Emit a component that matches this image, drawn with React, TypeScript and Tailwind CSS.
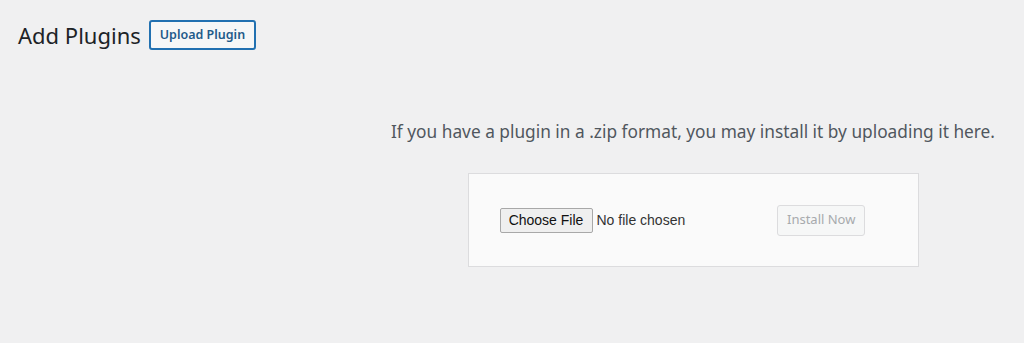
import React from "react";

export default function App() {
  return (
    <div className="h-[343px] w-[1024px] overflow-hidden bg-[#f0f0f1] font-['Noto_Sans',sans-serif] text-[#1d2327]">
      {/* Header */}
      <div className="flex items-center gap-[8px] pl-[18px] pt-[20px]">
        <h1 className="text-[22px] leading-[30px] font-normal text-[#1d2327]">Add Plugins</h1>
        <button className="h-[30px] rounded-[3px] border-2 border-[#2271b1] bg-[#f6f7f7] px-[9px] text-[12.5px] font-semibold text-[#1f5b8a]">
          Upload Plugin
        </button>
      </div>

      {/* Upload area */}
      <div className="ml-[362px] mt-[70px] flex flex-col items-center">
        <p className="text-[17.3px] leading-[24px] text-[#50575e]">
          If you have a plugin in a .zip format, you may install it by uploading it here.
        </p>
        <div className="mt-[29px] flex h-[94px] w-[451px] items-center border border-[#dcdcde] bg-[#fafafa] pl-[31px]">
          <div className="flex items-center font-['Liberation_Sans',Arial,sans-serif] text-[14px]">
            <span className="flex h-[25px] w-[93px] items-center justify-center rounded-[2px] border border-[#a8a8a8] bg-[#efefef] text-[#111]">
              Choose File
            </span>
            <span className="ml-[4px] text-[#333]">No file chosen</span>
          </div>
          <button className="ml-[92px] h-[31px] w-[88px] rounded-[3px] border border-[#dcdcde] bg-[#f6f7f7] text-[13px] text-[#a7aaad]">
            Install Now
          </button>
        </div>
      </div>
    </div>
  );
}
